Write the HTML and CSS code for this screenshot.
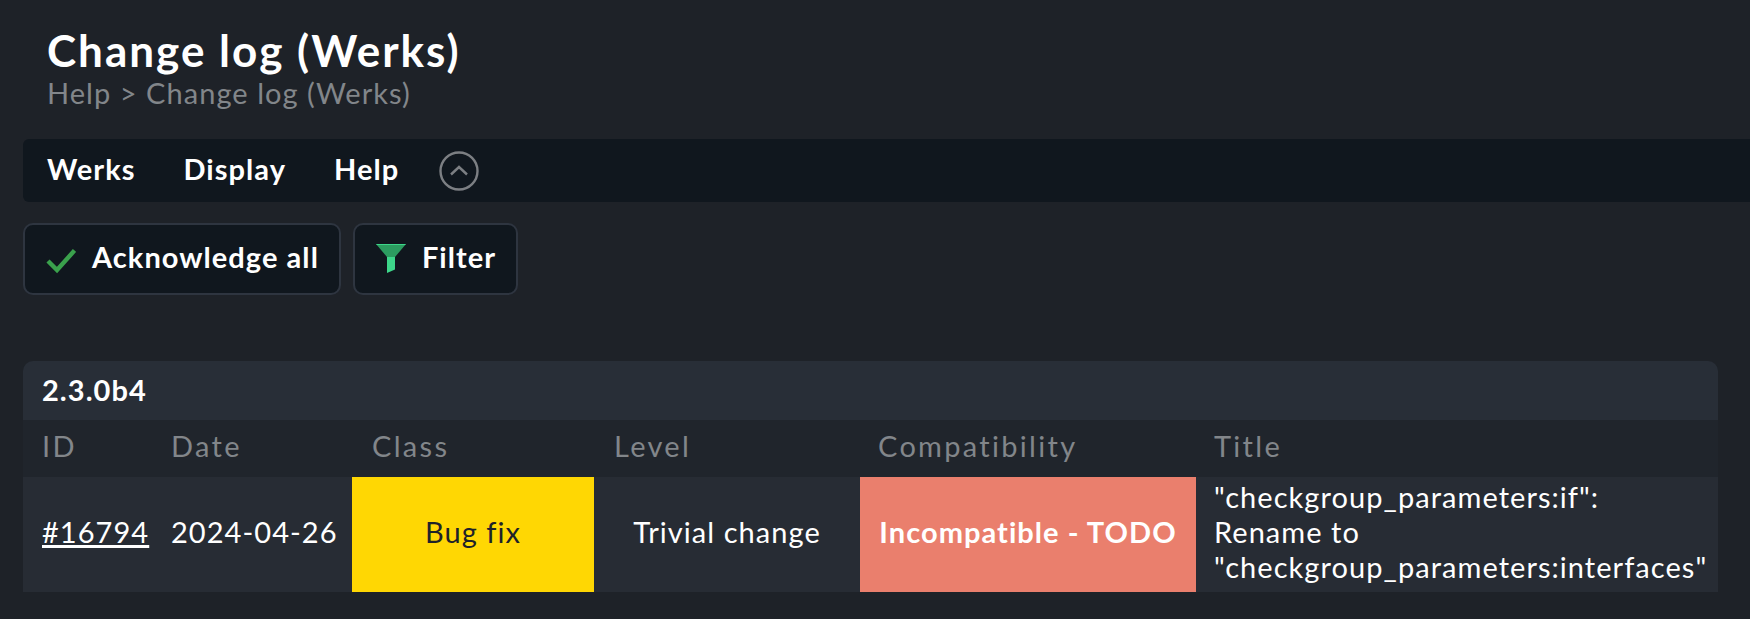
FILE: index.html
```html
<!DOCTYPE html>
<html lang="en">
<head>
  <meta charset="UTF-8">
  <link rel="stylesheet" href="styles.css">
</head>
<body>

<!-- title -->
<div class="page-title">
  <h1>Change log (Werks)</h1>
  <div class="breadcrumb">Help &gt; Change log (Werks)</div>
</div>

<!-- menu bar -->
<div class="menubar">
  <span class="menu-item">Werks</span>
  <span class="menu-item">Display</span>
  <span class="menu-item">Help</span>
  <svg class="collapse-icon" viewBox="0 0 40 40">
    <circle cx="20" cy="20" r="18.5"/>
    <path d="M12 23.5 L20 16 L28 23.5"/>
  </svg>
</div>

<!-- shortcuts -->
<div class="shortcuts">
  <button class="btn">
    <svg class="btn-icon" viewBox="0 0 30 30">
      <path class="check" d="M2 17 L11 26 L28.5 6.500"/>
    </svg>
    Acknowledge all
  </button>
  <button class="btn">
    <svg class="btn-icon" viewBox="0 0 30 30">
      <path class="funnel-top" d="M0 0 H30 L19 13 H11 Z"/>
      <path class="funnel-bottom" d="M0 0 H30 L29 1 H1 Z"/>
      <path class="funnel-bottom" d="M11 13 H19 V25.500 L11 29 Z"/>
    </svg>
    Filter
  </button>
</div>

<!-- werks table -->
<div class="werks">
  <div class="werks-version">2.3.0b4</div>
  <table>
    <thead>
      <tr>
        <th class="col-id">ID</th>
        <th class="col-date">Date</th>
        <th class="col-class">Class</th>
        <th class="col-level">Level</th>
        <th class="col-compat">Compatibility</th>
        <th>Title</th>
      </tr>
    </thead>
    <tbody>
      <tr>
        <td><a href="#">#16794</a></td>
        <td>2024-04-26</td>
        <td class="state-bugfix">Bug fix</td>
        <td class="center">Trivial change</td>
        <td class="state-incomp">Incompatible - TODO</td>
        <td class="title-cell">"checkgroup_parameters:if": Rename to "checkgroup_parameters:interfaces"</td>
      </tr>
    </tbody>
  </table>
</div>

</body>
</html>
```

FILE: styles.css
```css
* { margin: 0; padding: 0; box-sizing: border-box; }
body {
  font-family: Lato, sans-serif;
  font-size: 29px;
  letter-spacing: 1.05px;
  background: #1e2228;
  color: #fff;
  padding: 0 32px 0 23px;
  height: 619px;
  overflow: hidden;
}

/* title */
.page-title {
  padding: 25px 0 0 24px;
  height: 139px;
}
.page-title h1 {
  font-size: 44px;
  font-weight: 700;
  line-height: 50px;
  letter-spacing: 2px;
}
.breadcrumb {
  line-height: 35px;
  color: #82868a;
}

/* menu bar */
.menubar {
  display: flex;
  align-items: center;
  gap: 48px;
  height: 63px;
  margin-right: -32px;
  padding: 0 0 4px 24px;
  background: #10171e;
  border-radius: 6px 0 0 6px;
}
.menu-item {
  font-weight: 700;
}
.collapse-icon {
  width: 40px;
  height: 40px;
  margin: 4px 0 0 -8px;
  fill: none;
  stroke: #7c7f83;
  stroke-width: 2.4;
}

/* shortcuts */
.shortcuts {
  display: flex;
  gap: 12px;
  margin-top: 21px;
}
.btn {
  display: flex;
  align-items: center;
  gap: 16px;
  height: 72px;
  padding: 0 20px 5px 21px;
  background: #10171e;
  border: 2px solid #2e3540;
  border-radius: 10px;
  color: #fff;
  font-family: Lato, sans-serif;
  font-size: 29px;
  font-weight: 700;
  letter-spacing: 1.05px;
}
.btn-icon { width: 30px; height: 30px; margin-top: 5px; }
.check {
  fill: none;
  stroke: #3aa14c;
  stroke-width: 4.4;
}
.funnel-top { fill: #2c9c60; }
.funnel-bottom { fill: #3dd68a; }

/* table */
.werks {
  margin-top: 66px;
  background: #282e37;
  border-radius: 10px 10px 0 0;
  overflow: hidden;
}
.werks-version {
  height: 59px;
  padding-left: 19px;
  font-weight: 700;
  line-height: 58px;
}
table {
  width: 100%;
  border-collapse: collapse;
  table-layout: fixed;
}
th {
  height: 57px;
  padding: 0 0 7px 20px;
  background: #20252c;
  color: #82868a;
  font-weight: 400;
  letter-spacing: 2.3px;
  text-align: left;
}
td {
  height: 115px;
  padding: 0 0 6px 18px;
  background: #272c34;
  line-height: 35px;
}
th.col-id { width: 128px; padding-left: 19px; }
th.col-date { width: 201px; }
th.col-class { width: 242px; }
th.col-level { width: 266px; }
th.col-compat { width: 336px; padding-left: 18px; }
th:last-child { padding-left: 18px; }
td:first-child { padding-left: 19px; }
td:nth-child(2) { padding-left: 20px; }
td a {
  color: #fff;
  text-decoration-thickness: 3px;
}
.title-cell { padding-right: 8px; }
.center { text-align: center; padding: 0 0 6px; }
.state-bugfix {
  padding: 0 0 6px;
  background: #ffd703;
  color: #1e2229;
  text-align: center;
}
.state-incomp {
  padding: 0 0 6px;
  background: #ea7f6d;
  font-weight: 700;
  text-align: center;
}
```
